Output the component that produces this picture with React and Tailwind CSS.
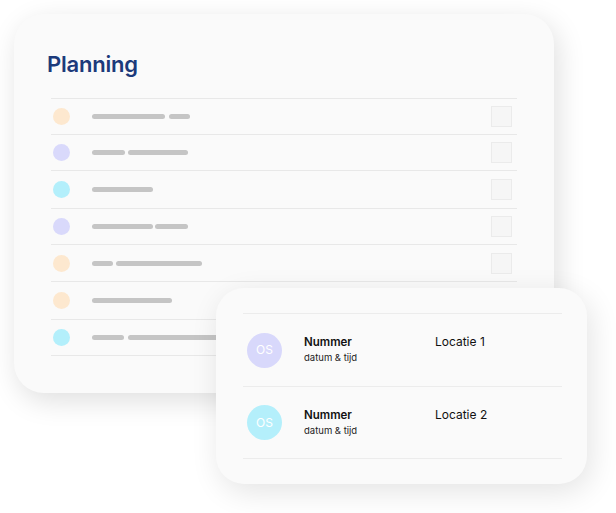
import React from "react";

const rows = [
  { dot: "bg-[#fde8cf]", h: "h-[35px]", bars: ["w-[73px]", "w-[21px]"], gap: "gap-[4px]" },
  { dot: "bg-[#d9d9fb]", h: "h-[35px]", bars: ["w-[33px]", "w-[60px]"], gap: "gap-[3px]" },
  { dot: "bg-[#b3effb]", h: "h-[37px]", bars: ["w-[61px]"], gap: "gap-[3px]" },
  { dot: "bg-[#d9d9fb]", h: "h-[35px]", bars: ["w-[61px]", "w-[33px]"], gap: "gap-[2px]" },
  { dot: "bg-[#fde8cf]", h: "h-[36px]", bars: ["w-[21px]", "w-[86px]"], gap: "gap-[3px]" },
  { dot: "bg-[#fde8cf]", h: "h-[37px]", bars: ["w-[80px]"], gap: "gap-[3px]" },
  { dot: "bg-[#b3effb]", h: "h-[35px]", bars: ["w-[32px]", "w-[120px]"], gap: "gap-[4px]" },
];

const people = [
  { bg: "bg-[#d8d8fb]", loc: "Locatie 1", h: "h-[72px]" },
  { bg: "bg-[#b4effb]", loc: "Locatie 2", h: "h-[71px]" },
];

export default function App() {
  return (
    <div
      className="relative w-[616px] h-[513px] bg-white overflow-hidden"
      style={{ fontFamily: "Inter, 'Noto Sans', sans-serif" }}
    >
      <div className="ml-[14px] mt-[14px] w-[540px] h-[379px] rounded-[30px] bg-[#fafafa] shadow-[4px_8px_28px_rgba(0,0,0,0.13)] pt-[36px]">
        <h1 className="pl-[33px] text-[22px] leading-[28px] font-semibold text-[#1c3a7b] tracking-[-0.2px]">
          Planning
        </h1>
        <div className="mx-[37px] mt-[20px] border-b border-[#e8e8e8]">
          {rows.map((r, i) => (
            <div
              key={i}
              className={`${r.h} box-content border-t border-[#e8e8e8] flex items-center`}
            >
              <div className={`ml-[2px] w-[17px] h-[17px] rounded-full ${r.dot}`} />
              <div className={`ml-[22px] flex ${r.gap}`}>
                {r.bars.map((b, j) => (
                  <div key={j} className={`${b} h-[5px] rounded-full bg-[#c5c5c5]`} />
                ))}
              </div>
              <div className="ml-auto mr-[5px] w-[21px] h-[21px] border border-[#ebebeb] bg-[#f6f6f6]" />
            </div>
          ))}
        </div>
      </div>

      <div className="absolute left-[216px] top-[288px] w-[371px] h-[196px] rounded-[28px] bg-[#fafafa] shadow-[4px_8px_30px_rgba(0,0,0,0.11)] pt-[25px] pl-[27px] pr-[25px]">
        <div className="border-b border-[#ececec]">
          {people.map((p, i) => (
            <div
              key={i}
              className={`${p.h} box-content border-t border-[#ececec] flex items-center`}
            >
              <div
                className={`ml-[4px] w-[35px] h-[35px] rounded-full ${p.bg} flex items-center justify-center text-white text-[12px] font-normal`}
              >
                OS
              </div>
              <div className="ml-[22px] flex items-start">
                <div className="w-[131px]">
                  <div className="text-[11.5px] leading-[14px] font-semibold text-[#111]">Nummer</div>
                  <div className="mt-[2px] text-[9.5px] leading-[14px] text-[#222]">datum &amp; tijd</div>
                </div>
                <div className="text-[12px] leading-[14px] text-[#111]">{p.loc}</div>
              </div>
            </div>
          ))}
        </div>
      </div>
    </div>
  );
}
